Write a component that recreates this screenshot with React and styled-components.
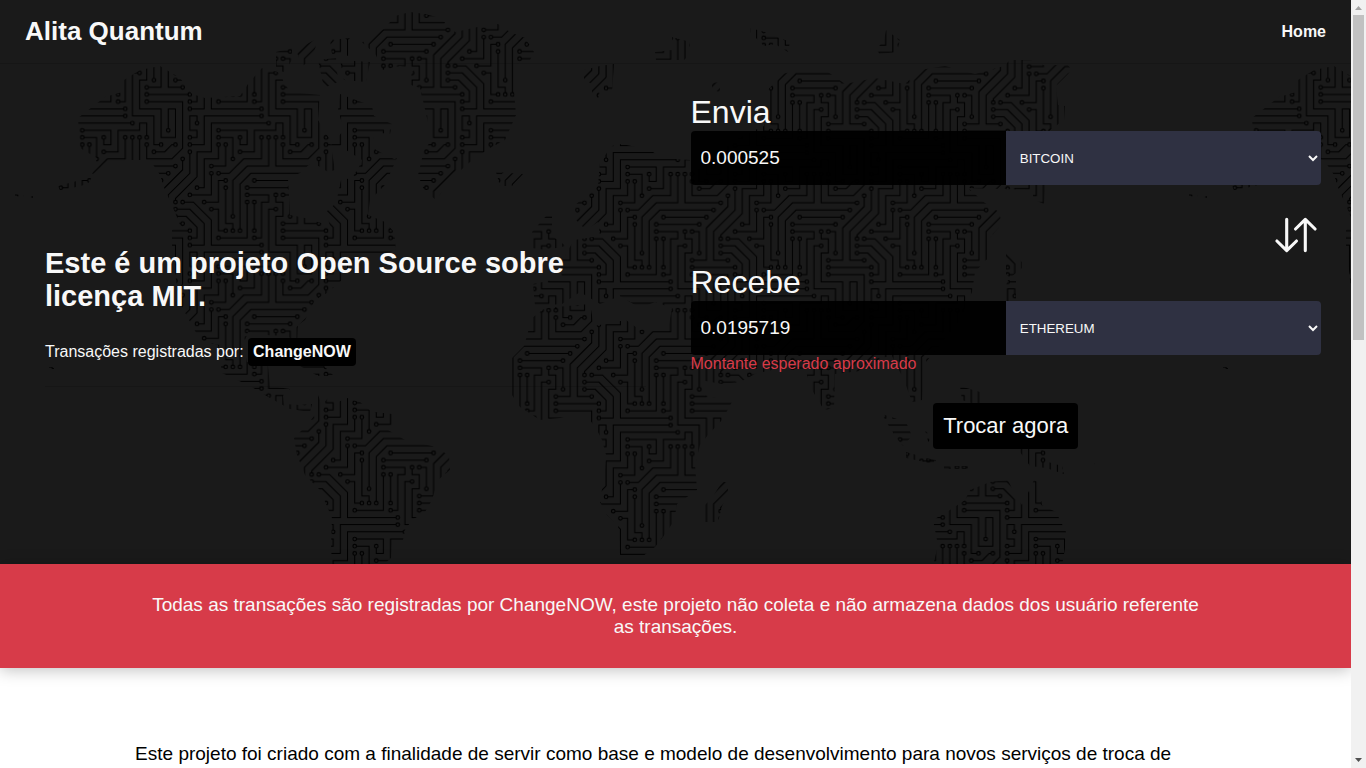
import React from "react";
import styled, { createGlobalStyle } from "styled-components";

const GlobalStyle = createGlobalStyle`
  *, *::before, *::after { box-sizing: border-box; }
  body {
    margin: 0;
    background: #fff;
    color: #000;
    font-family: "Liberation Sans", Arial, sans-serif;
    font-size: 16px;
  }
  h1, h2, p { margin: 0; }
`;

const Window = styled.div`
  display: grid;
  grid-template-columns: minmax(0, 1fr) 15px;
  height: 100vh;
`;

const Page = styled.div`
  overflow-y: auto;
  scrollbar-width: none;
`;

const ScrollTrack = styled.div`
  display: flex;
  flex-direction: column;
  background: #f1f1f1;
`;

const ScrollArrow = styled.svg`
  display: block;
  flex: none;
  width: 15px;
  height: 15px;
  fill: ${(props) => props.$color};
`;

const ScrollLane = styled.div`
  flex: 1;
  padding: 0 2px;
`;

const ScrollThumb = styled.div`
  height: 44%;
  background: #c1c1c1;
`;

const Hero = styled.div`
  position: relative;
  isolation: isolate;
  background: #1a1a1a;
  color: #f8f8f8;
`;

const MapLayer = styled.svg`
  position: absolute;
  inset: 0;
  z-index: -1;
  width: 100%;
  height: 100%;
`;

const TopBar = styled.header`
  display: flex;
  align-items: center;
  justify-content: space-between;
  height: 64px;
  padding: 0 25px;
  border-bottom: 1px solid rgba(0, 0, 0, 0.12);
`;

const Brand = styled.a`
  color: inherit;
  font-size: 26px;
  font-weight: bold;
  line-height: 31px;
  text-decoration: none;
`;

const NavLink = styled.a`
  color: inherit;
  font-weight: bold;
  line-height: 18px;
  text-decoration: none;
`;

const Columns = styled.main`
  display: grid;
  grid-template-columns: 1fr 1fr;
  min-height: 500px;
  padding: 0 15px;
`;

const Intro = styled.section`
  align-self: center;
  padding: 6px 30px 0;
`;

const Title = styled.h1`
  margin-bottom: 25px;
  font-size: 29px;
  line-height: 33px;
`;

const Partner = styled.p`
  line-height: 28px;
`;

const PartnerLink = styled.a`
  display: inline-block;
  padding: 5px;
  border-radius: 4px;
  background: #000;
  color: inherit;
  font-weight: bold;
  line-height: 18px;
  text-decoration: none;
`;

const Rule = styled.hr`
  margin: 20px 0 0;
  border: 0;
  border-top: 1px solid rgba(0, 0, 0, 0.15);
`;

const Exchange = styled.form`
  padding: 30px 15px;
`;

const FieldLabel = styled.label`
  display: block;
  font-size: 32px;
  line-height: 37px;
`;

const FieldRow = styled.div`
  display: grid;
  grid-template-columns: 1fr 1fr;
  height: 54px;
`;

const Amount = styled.input`
  min-width: 0;
  padding: 0 10px;
  border: 0;
  border-radius: 4px 0 0 4px;
  background: rgba(0, 0, 0, 0.95);
  color: #f8f8f8;
  font-family: inherit;
  font-size: 19px;
`;

const Currency = styled.select`
  min-width: 0;
  padding: 0 0 0 10px;
  border: 0;
  border-radius: 0 4px 4px 0;
  background: #2f3142;
  color: #f8f8f8;
  font-family: inherit;
`;

const SwapRow = styled.div`
  display: flex;
  justify-content: flex-end;
  padding: 25px 0 4px;
`;

const SwapButton = styled.button`
  display: block;
  width: 50px;
  height: 50px;
  padding: 0;
  border: 0;
  background: none;
  color: #f8f8f8;
  cursor: pointer;
`;

const Hint = styled.p`
  color: #d73b49;
  line-height: 18px;
`;

const Actions = styled.div`
  display: flex;
  justify-content: center;
  padding-top: 30px;
`;

const SubmitButton = styled.button`
  padding: 10px;
  border: 0;
  border-radius: 4px;
  background: #000;
  color: #f8f8f8;
  font-family: inherit;
  font-size: 22px;
  line-height: 26px;
  cursor: pointer;
`;

const Notice = styled.section`
  position: relative;
  padding: 30px 11%;
  background: #d73b49;
  box-shadow: 0 2px 15px rgba(0, 0, 0, 0.25);
  color: #f8f8f8;
  font-size: 19px;
  line-height: 22px;
  text-align: center;
`;

const About = styled.section`
  min-height: 1080px;
  padding: 75px 10%;
  font-size: 19px;
  line-height: 22px;
`;

/* One 19 x 19 circuit tile: every trace is a list of grid points.
   A trace has a ring on its first and on its last point. */
const TRACES = [
  "0,17 5,17 5,23.5 3.5,25 0,25 0,23",
  "13,5 15,5 15,2 18,2 18,1 19,1 19,3",
  "10,2 14,2 14,4 13,4 13,3",
  "18,13 17,13 17,19 20,19 20,23 21,23",
  "18,11 18,12 19,12 19,14 18,14 18,18 21,18 21,22 23,22 23,18 22,18 22,21",
  "0,11 1,11 1,14",
  "0,16 6,16",
  "0,15 2,15 2,10.5 5,7.5 5,6",
  "5,15 3,15 3,11 6,8 6,5",
  "4,12 4,11.5 7,8.5 7,5 9,5 9,1 17,1",
  "5,12 6.5,12 9,14.5 9,18 16,18",
  "4,13 6,13 8,15 8,18 6,18",
  "4,14 5.5,14 7,15.5 7,17 6,17",
  "1,5 2.5,5 3.5,4 4,4",
  "6,3 7,3 7,2 6,2 6,0 7,0 7,1",
  "6,4 8,4 8,0 16,0",
  "7,10 8,10 8,6 10,6 10,4",
  "6,11 9,11 9,8",
  "9,7 11,7 11,4",
  "10,3 12,3 12,6",
  "10,8 11.5,8 13.5,6 16,6 16,3",
  "17,3 17,7 14,7 12,9 12,14",
  "18,3 18,7 23,7",
  "22,8 14.5,8 13,9.5 13,16",
  "15,9 21,9",
  "14,10 20,10",
  "14,11 17,11 17,12 16,12 16,17 15,17",
  "14,12 14,17 10,17",
  "15,12 15,16",
  "11,9 10,9 10,12 8,12",
  "11,10 11,15 12,15 12,16",
  "9,13 10,13 10,16 11,16",
];

/* Land areas of the west and of Australia. */
const WEST_LAND = [
  "M78 118L105 97L122 92L124 80L140 70L160 66L180 78L192 94L205 98L240 96L248 84L262 68L278 72L290 92L320 95L318 120L330 140L335 170L328 172L312 162L300 173L288 178L290 215L305 218L318 222L330 226L326 212L336 203L341 180L352 178L360 165L375 168L397 158L385 185L370 200L368 215L385 222L394 232L396 250L375 256L352 262L341 281L327 293L315 300L305 320L298 325L297 345L288 336L265 335L248 332L243 345L247 362L268 366L270 386L290 389L283 396L284 404L300 405L312 404L310 412L290 409L270 398L250 386L222 373L218 345L200 340L188 318L178 300L175 270L172 245L172 230L180 225L172 205L165 190L160 175L150 160L132 160L110 162L92 175L97 158L80 148Z",
  "M276 52L292 48L292 60L284 72L276 70ZM296 50L318 38L312 60L302 66ZM318 60L336 58L338 82L324 88ZM330 40L350 38L350 56L332 54ZM340 60L370 62L366 82L344 80Z",
  "M340 94L372 106L374 116L392 124L390 134L372 132L376 150L396 160L360 178L362 160L346 150L330 146L344 130L338 110Z",
  "M362 42L385 28L395 16L410 12L425 14L440 18L455 32L482 26L498 24L510 32L525 38L534 52L530 60L516 64L514 90L516 115L505 140L490 148L470 162L452 178L436 200L424 190L418 175L424 150L432 140L424 105L420 88L408 84L414 68L400 66L382 70L376 55Z",
  "M318 395L322 405L328 398L338 402L347 398L360 402L372 412L392 418L388 430L405 440L432 446L449 455L450 470L438 480L432 500L425 512L412 520L405 530L403 540L392 545L391 558L382 566L332 566L331 545L332 518L320 490L305 475L297 455L294 438L302 430L315 415Z",
  "M300 366L322 364L334 376L318 376ZM374 412L392 414L392 426L376 422Z",
  "M933 520L950 510L965 500L970 490L990 482L1008 480L1015 495L1022 505L1034 480L1038 482L1042 505L1056 512L1066 532L1065 548L1062 566L933 566L938 545Z",
  "M1015 440L1032 446L1048 452L1048 462L1062 466L1064 474L1046 468L1030 466L1020 452ZM944 466L968 466L968 469L944 469ZM926 458L936 460L935 464L926 463ZM960 386L980 392L980 406L962 400Z",
  "M496 172L508 173L523 174L512 186L500 186Z",
  "M15 194L24 195L24 197L15 196ZM28 196L36 196L36 198L28 198ZM58 186L92 177L88 184L60 191ZM49 367L54 367L54 369L49 369Z",
];

/* Land areas of Europe, Africa and Asia. */
const EAST_LAND = [
  "M575 205L586 196L598 186L600 162L612 146L622 144L650 150L662 158L690 160L690 172L702 168L722 150L742 136L764 126L766 92L782 74L800 70L828 72L845 84L875 78L905 84L920 70L945 66L975 74L1004 66L1010 60L1030 60L1046 66L1067 64L1072 70L1056 86L1058 105L1065 106L1064 120L1050 130L1044 204L1034 200L1032 190L968 188L985 203L999 212L1002 224L988 240L988 258L975 272L972 292L960 320L940 345L926 362L922 400L912 402L904 380L892 356L880 358L868 370L835 374L834 408L824 410L812 390L806 372L780 368L755 374L740 382L722 384L700 380L690 345L668 330L672 308L655 302L640 308L620 296L600 304L580 292L562 304L535 306L533 284L562 278L560 264L574 240L600 236L598 222L586 230L576 220Z",
  "M512 358L524 346L532 318L545 308L590 304L594 326L626 320L640 330L672 326L690 342L702 375L704 395L732 402L722 420L708 435L700 445L695 465L697 490L677 504L674 521L663 537L655 547L643 556L620 556L618 525L607 515L600 502L605 470L606 455L602 440L597 430L590 420L584 412L560 418L540 420L520 407L512 395Z",
  "M532 232L546 216L552 216L552 236L566 246L546 250L532 248Z",
  "M584 70L600 66L614 64L612 92L600 90L598 100L592 96L592 84L584 80Z",
  "M655 52L672 50L672 37L690 42L690 54L684 60L656 60Z",
  "M750 28L765 32L790 42L788 52L775 44L764 46L756 38L750 32ZM712 83L720 82L720 92L712 90Z",
  "M876 50L884 40L886 30L900 40L897 52L880 54ZM1006 250L1010 252L1022 262L1022 268L1010 278L1006 274ZM1008 280L1016 280L1016 302L1004 306L1002 296Z",
  "M722 482L728 482L728 495L722 506L718 522L705 522L704 506L712 498Z",
  "M882 414L906 422L912 436L903 446L898 440L890 428ZM925 430L932 438L928 442ZM906 452L934 460L934 464L906 458ZM1094 463L1100 466L1098 470Z",
];

const MAP_WIDTH = 1174;
const MAP_COPIES = [0, 1, 2, 3];
const TILE_SHIFTS = [[0, 0], [-19, 0], [0, -19], [-19, -19]];

function CircuitTile({ id, x, y }) {
  const rings = TRACES.flatMap((trace) => {
    const points = trace.split(" ");
    return [points[0], points[points.length - 1]].map((p) => p.split(",").map(Number));
  });
  return (
    <pattern
      id={id}
      width="19"
      height="19"
      patternUnits="userSpaceOnUse"
      patternTransform={`translate(${x} ${y}) scale(7.17)`}
    >
      {TILE_SHIFTS.map(([dx, dy]) => (
        <g key={`${dx} ${dy}`} transform={`translate(${dx + 0.5} ${dy + 0.5})`} stroke="#000">
          {TRACES.map((trace) => (
            <polyline key={trace} points={trace} fill="none" strokeWidth="0.14" />
          ))}
          {rings.map(([cx, cy], i) => (
            <circle key={i} cx={cx} cy={cy} r="0.25" fill="#1a1a1a" strokeWidth="0.16" />
          ))}
        </g>
      ))}
    </pattern>
  );
}

function CircuitMap() {
  return (
    <MapLayer aria-hidden="true">
      <defs>
        <CircuitTile id="circuit-west" x={143.2} y={112.4} />
        <CircuitTile id="circuit-east" x={143.6} y={149.1} />
        <g id="circuit-land">
          <path d={WEST_LAND.join("")} fill="url(#circuit-west)" />
          <path d={EAST_LAND.join("")} fill="url(#circuit-east)" />
        </g>
      </defs>
      {MAP_COPIES.map((n) => (
        <use key={n} href="#circuit-land" x={n * MAP_WIDTH} />
      ))}
    </MapLayer>
  );
}

function SwapIcon() {
  return (
    <svg
      width="50"
      height="50"
      viewBox="0 0 50 50"
      fill="none"
      stroke="currentColor"
      strokeWidth="3.1"
      strokeLinecap="round"
      strokeLinejoin="round"
      aria-hidden="true"
    >
      <path d="M15.7 9.3V40.6M5.9 31L15.7 40.6L25.5 31" />
      <path d="M34.3 40.6V9.3M24.5 19L34.3 9.3L44.1 19" />
    </svg>
  );
}

function CurrencyField({ id, label, amount, currency }) {
  return (
    <div>
      <FieldLabel htmlFor={id}>{label}</FieldLabel>
      <FieldRow>
        <Amount id={id} type="text" defaultValue={amount} />
        <Currency aria-label={`${label} moeda`} defaultValue={currency}>
          <option>BITCOIN</option>
          <option>ETHEREUM</option>
        </Currency>
      </FieldRow>
    </div>
  );
}

function Scrollbar() {
  return (
    <ScrollTrack aria-hidden="true">
      <ScrollArrow $color="#a3a3a3" viewBox="0 0 15 15">
        <path d="M4 10L7.5 6L11 10Z" />
      </ScrollArrow>
      <ScrollLane>
        <ScrollThumb />
      </ScrollLane>
      <ScrollArrow $color="#505050" viewBox="0 0 15 15">
        <path d="M4 5L7.5 9L11 5Z" />
      </ScrollArrow>
    </ScrollTrack>
  );
}

export default function App() {
  return (
    <Window>
      <GlobalStyle />
      <Page>
        <Hero>
          <CircuitMap />
          <TopBar>
            <Brand href="#">Alita Quantum</Brand>
            <nav>
              <NavLink href="#">Home</NavLink>
            </nav>
          </TopBar>
          <Columns>
            <Intro>
              <Title>Este é um projeto Open Source sobre licença MIT.</Title>
              <Partner>
                Transações registradas por: <PartnerLink href="#">ChangeNOW</PartnerLink>
              </Partner>
              <Rule />
            </Intro>
            <Exchange onSubmit={(event) => event.preventDefault()}>
              <CurrencyField id="send" label="Envia" amount="0.000525" currency="BITCOIN" />
              <SwapRow>
                <SwapButton type="button" aria-label="Inverter moedas">
                  <SwapIcon />
                </SwapButton>
              </SwapRow>
              <CurrencyField id="receive" label="Recebe" amount="0.0195719" currency="ETHEREUM" />
              <Hint>Montante esperado aproximado</Hint>
              <Actions>
                <SubmitButton type="submit">Trocar agora</SubmitButton>
              </Actions>
            </Exchange>
          </Columns>
        </Hero>
        <Notice>
          <p>
            Todas as transações são registradas por ChangeNOW, este projeto não coleta e não
            armazena dados dos usuário referente as transações.
          </p>
        </Notice>
        <About>
          <p>
            Este projeto foi criado com a finalidade de servir como base e modelo de
            desenvolvimento para novos serviços de troca de
          </p>
        </About>
      </Page>
      <Scrollbar />
    </Window>
  );
}
